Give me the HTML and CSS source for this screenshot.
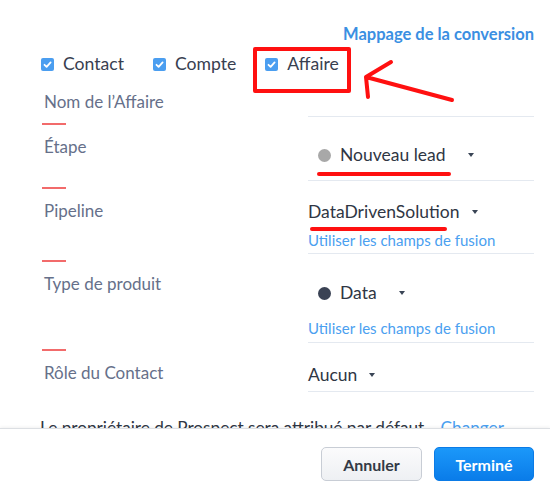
FILE: index.html
```html
<!DOCTYPE html>
<html lang="fr">
<head>
<meta charset="utf-8">
<link rel="stylesheet" href="styles.css">
</head>
<body>
<div class="dialog">
  <div class="content">
    <div class="map-row"><a class="map-link">Mappage de la conversion</a></div>
    <div class="modules">
      <span class="module"><span class="cb"><svg viewBox="0 0 13 13" width="13" height="13"><path d="M3.5 6.8 L5.6 8.8 L9.6 4.4" fill="none" stroke="#fff" stroke-width="1.8" stroke-linecap="round" stroke-linejoin="round"/></svg></span>Contact</span>
      <span class="module"><span class="cb"><svg viewBox="0 0 13 13" width="13" height="13"><path d="M3.5 6.8 L5.6 8.8 L9.6 4.4" fill="none" stroke="#fff" stroke-width="1.8" stroke-linecap="round" stroke-linejoin="round"/></svg></span>Compte</span>
      <span class="module module-marked"><span class="cb"><svg viewBox="0 0 13 13" width="13" height="13"><path d="M3.5 6.8 L5.6 8.8 L9.6 4.4" fill="none" stroke="#fff" stroke-width="1.8" stroke-linecap="round" stroke-linejoin="round"/></svg></span>Affaire</span>
    </div>

    <div class="field-row row-1">
      <div class="field-label">Nom de l’Affaire</div>
      <div class="field-value"></div>
    </div>
    <div class="dash"></div>

    <div class="field-row row-2">
      <div class="field-label">Étape</div>
      <div class="field-value with-dot">
        <span class="select"><span class="dot dot-gray"></span><span class="val marked">Nouveau lead</span><span class="caret"></span></span>
      </div>
    </div>
    <div class="dash"></div>

    <div class="field-row row-3">
      <div class="field-label">Pipeline</div>
      <div class="field-value">
        <span class="select"><span class="val marked">DataDrivenSolution</span><span class="caret"></span></span>
        <a class="merge-link">Utiliser les champs de fusion</a>
      </div>
    </div>
    <div class="dash"></div>

    <div class="field-row row-4">
      <div class="field-label">Type de produit</div>
      <div class="field-value with-dot">
        <span class="select"><span class="dot dot-dark"></span><span class="val">Data</span><span class="caret"></span></span>
        <a class="merge-link merge-link-far">Utiliser les champs de fusion</a>
      </div>
    </div>
    <div class="dash"></div>

    <div class="field-row row-5">
      <div class="field-label">Rôle du Contact</div>
      <div class="field-value">
        <span class="select"><span class="val">Aucun</span><span class="caret"></span></span>
      </div>
    </div>

    <p class="owner">Le propriétaire de Prospect sera attribué par défaut <a class="change-link">Changer</a></p>
  </div>
  <div class="footer">
    <button class="btn btn-cancel">Annuler</button>
    <button class="btn btn-done">Terminé</button>
  </div>
  <svg class="arrow" viewBox="0 0 100 50" width="100" height="50"><path d="M31 4 L6 19 L8 39 M6 19 L92 42" fill="none" stroke="#ff1010" stroke-width="4" stroke-linecap="round" stroke-linejoin="round"/></svg>
</div>
</body>
</html>
```

FILE: styles.css
```css
* { box-sizing: border-box; }
html, body { margin: 0; padding: 0; background: #fff; }
body { font-family: Lato, "Noto Sans", sans-serif; color: #333a47; }

.dialog {
  position: relative;
  width: 550px;
  height: 488px;
  display: flex;
  flex-direction: column;
  overflow: hidden;
}

.content {
  height: 428px;
  overflow: hidden;
  padding: 24px 16px 0 42px;
}

.map-row { display: flex; justify-content: flex-end; height: 20px; line-height: 20px; }
.map-link { color: #3b8fe2; font-weight: 700; font-size: 16.5px; }

.modules {
  display: flex;
  gap: 29px;
  margin: 10px 0 0 -1px;
  height: 20px;
}
.module {
  position: relative;
  display: flex;
  align-items: center;
  gap: 9px;
  font-size: 17.6px;
  line-height: 20px;
  color: #384050;
}
.cb {
  width: 13px; height: 13px;
  border-radius: 2px;
  background: #4b9ef0;
  display: flex;
}
.module-marked::before {
  content: "";
  position: absolute;
  left: -12px; right: -12px; top: -7px; bottom: -19px;
  border: 4px solid #ff1010;
  border-radius: 2px;
}

.field-row {
  display: grid;
  grid-template-columns: 266px 226px;
}
.field-label {
  font-size: 17px;
  line-height: 20px;
  color: #66708a;
  padding-left: 2px;
}
.field-value {
  border-bottom: 1px solid #e4e9f0;
  display: flex;
  flex-direction: column;
  align-items: flex-start;
}

.row-1 { margin-top: 18px; }
.row-1 .field-value { height: 25px; }

.dash { width: 24px; height: 2px; background: #f26b6b; margin-top: 6px; margin-bottom: 12px; }

.select {
  display: flex;
  align-items: center;
  font-size: 17.5px;
  line-height: 20px;
  color: #2f3644;
  height: 20px;
}
.with-dot .select { padding-left: 10px; }
.dot { width: 13px; height: 13px; border-radius: 50%; margin-right: 9px; }
.dot-gray { background: #a8a8a8; }
.dot-dark { background: #3a4254; }
.val { position: relative; }
.marked::after {
  content: "";
  position: absolute;
  left: -23px; right: -5px; bottom: -11px;
  height: 4px;
  border-radius: 2px;
  background: #ff1010;
}
.row-3 .marked::after { left: 2px; right: 13px; bottom: -9px; }
.caret {
  width: 0; height: 0;
  border-left: 3.5px solid transparent;
  border-right: 3.5px solid transparent;
  border-top: 4px solid #3a4556;
  margin-left: 12px;
}
.with-dot .caret { margin-left: 22px; }

.merge-link { color: #4aa0f0; font-size: 15px; line-height: 18px; margin-top: 9px; }
.merge-link-far { margin-top: 16px; }

.row-2 .field-value { padding-top: 8px; height: 44px; }
.row-3 .field-value { padding-top: 1px; height: 53px; }
.row-4 .field-value { padding-top: 9px; height: 69px; }
.row-5 { margin-top: 1px; }
.row-5 .field-value { padding-top: 2px; height: 29px; }

.owner {
  margin: 26px 0 0 -2px;
  font-size: 17.2px;
  line-height: 20px;
  color: #2f3644;
  white-space: nowrap;
}
.change-link { color: #4aa0f0; margin-left: 12px; }

.footer {
  flex: 1;
  border-top: 1px solid #dcdfe3;
  box-shadow: 0 -1px 3px rgba(0,0,0,0.06);
  display: flex;
  justify-content: flex-end;
  align-items: flex-start;
  gap: 12px;
  padding: 18px 16px 0 0;
  background: #fff;
}
.btn {
  height: 34px;
  border-radius: 5px;
  font-family: Lato, "Noto Sans", sans-serif;
  font-size: 16px;
  font-weight: 700;
  cursor: pointer;
}
.btn-cancel {
  width: 101px;
  background: linear-gradient(#fbfbfc, #eef0f3);
  border: 1px solid #c8cdd5;
  color: #333a46;
}
.btn-done {
  width: 100px;
  background: linear-gradient(#1b98fa, #0a7ce9);
  border: 1px solid #0b7be6;
  color: #fff;
}

.arrow {
  position: absolute;
  left: 360px;
  top: 58px;
}
```
